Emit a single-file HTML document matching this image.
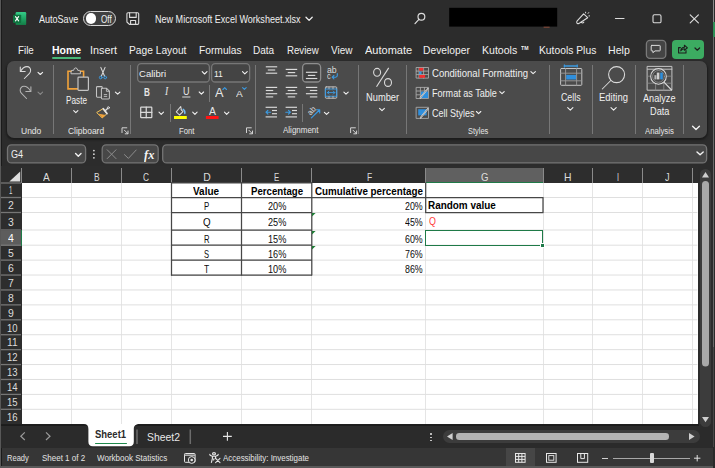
<!DOCTYPE html>
<html><head><meta charset="utf-8"><title>Excel</title>
<style>
html,body{margin:0;padding:0}
body{width:715px;height:468px;position:relative;overflow:hidden;background:#2c2c2c;font-family:"Liberation Sans",sans-serif}
.a{position:absolute}
.t{position:absolute;white-space:nowrap;line-height:1;transform-origin:0 0;display:block}
svg{position:absolute;overflow:visible}
.box{position:absolute;box-sizing:border-box;border:1px solid #6b6b6b;background:#3d3d3d;border-radius:4px}
.sep{position:absolute;width:1px;background:#777}
.hsep{position:absolute;width:1px;background:#8a8a8a;top:168px;height:15px}
.rsep{position:absolute;height:1px;background:#727272;left:1px;width:20px;box-shadow:0 1px 0 #464646}
.gv{position:absolute;width:1px;background:#e5e5e5;top:183px;height:242px}
.gh{position:absolute;height:1px;background:#e5e5e5;left:22px;width:676px}
.bk{position:absolute;background:#3a3a3a}

</style></head>
<body>
<div class="a" style="left:0;top:0;width:1px;height:468px;background:#585858"></div>
<div class="a" style="left:1px;top:0;width:1px;height:468px;background:#1b1b1b"></div>
<div class="a" style="left:7px;top:61px;width:700px;height:77px;border-radius:7px;background:#4b4b4b;box-shadow:0 1.5px 2px 0.5px #1c1c1c"></div>
<div class="sep" style="left:53px;top:65px;height:69px"></div>
<div class="sep" style="left:130px;top:65px;height:69px"></div>
<div class="sep" style="left:255px;top:65px;height:69px"></div>
<div class="sep" style="left:358px;top:65px;height:69px"></div>
<div class="sep" style="left:406px;top:65px;height:69px"></div>
<div class="sep" style="left:549px;top:65px;height:69px"></div>
<div class="sep" style="left:592px;top:65px;height:69px"></div>
<div class="sep" style="left:635px;top:65px;height:69px"></div>
<div class="sep" style="left:683px;top:65px;height:69px"></div>
<div class="sep" style="left:209.2px;top:85px;height:17px"></div>
<div class="sep" style="left:169.5px;top:104px;height:18px"></div>
<div class="sep" style="left:302.2px;top:104px;height:18px"></div>
<div class="a" style="left:51.5px;top:57.3px;width:29.4px;height:2px;background:#48b978;border-radius:1px"></div>
<div class="a" style="left:83px;top:10.5px;width:33.4px;height:15.8px;box-sizing:border-box;border:1.1px solid #d8d8d8;border-radius:8px;background:#404040"></div>
<div class="a" style="left:85.6px;top:13.2px;width:10.4px;height:10.4px;border-radius:50%;background:#fff"></div>
<svg style="left:0;top:0" width="715" height="40"><rect x="449.2" y="7.8" width="108" height="18.8" fill="#000"/><rect x="543.6" y="26.7" width="6" height="1" fill="#8a4a38"/></svg>
<div class="a" style="left:672.2px;top:40px;width:32px;height:18.6px;background:#3cab61;border-radius:4px"></div>
<div class="a" style="left:1px;top:166px;width:697px;height:17px;background:#2d2d2d"></div>
<div class="a" style="left:1px;top:183px;width:21px;height:243px;background:#2d2d2d"></div>
<div class="a" style="left:426px;top:168px;width:117px;height:14px;background:#606060"></div>
<div class="a" style="left:425.5px;top:181.6px;width:117.5px;height:1.6px;background:#1f7a48"></div>
<div class="a" style="left:1px;top:230.5px;width:20px;height:15px;background:#5d5d5d"></div>
<div class="a" style="left:20.6px;top:230px;width:1.6px;height:16px;background:#1f7a48"></div>
<div class="hsep" style="left:21px"></div>
<div class="hsep" style="left:71px"></div>
<div class="hsep" style="left:121px"></div>
<div class="hsep" style="left:171px"></div>
<div class="hsep" style="left:241px"></div>
<div class="hsep" style="left:311px"></div>
<div class="hsep" style="left:425px"></div>
<div class="hsep" style="left:542.5px"></div>
<div class="hsep" style="left:592px"></div>
<div class="hsep" style="left:642px"></div>
<div class="hsep" style="left:692px"></div>
<div class="a" style="left:22px;top:183px;width:675.5px;height:241.6px;background:#fff"></div>
<div class="gv" style="left:71px"></div>
<div class="gv" style="left:121px"></div>
<div class="gv" style="left:171px"></div>
<div class="gv" style="left:241px"></div>
<div class="gv" style="left:311px"></div>
<div class="gv" style="left:425px"></div>
<div class="gv" style="left:542.5px"></div>
<div class="gv" style="left:592px"></div>
<div class="gv" style="left:642px"></div>
<div class="gv" style="left:692px"></div>
<svg style="left:9px;top:170.6px" width="12" height="11"><path d="M11.2 0.4V10.4H0.4Z" fill="#dedede"/></svg>
<svg style="left:0;top:0" width="715" height="468" viewBox="0 0 715 468" fill="none">
<path d="M22 197.5H697.4" stroke="#dfdfdf" stroke-width="1"/>
<path d="M22 212.5H697.4" stroke="#dfdfdf" stroke-width="1"/>
<path d="M22 230.0H697.4" stroke="#dfdfdf" stroke-width="1"/>
<path d="M22 245.2H697.4" stroke="#dfdfdf" stroke-width="1"/>
<path d="M22 260.12H697.4" stroke="#dfdfdf" stroke-width="1"/>
<path d="M22 275.04H697.4" stroke="#dfdfdf" stroke-width="1"/>
<path d="M22 289.96H697.4" stroke="#dfdfdf" stroke-width="1"/>
<path d="M22 304.88H697.4" stroke="#dfdfdf" stroke-width="1"/>
<path d="M22 319.8H697.4" stroke="#dfdfdf" stroke-width="1"/>
<path d="M22 334.72H697.4" stroke="#dfdfdf" stroke-width="1"/>
<path d="M22 349.64H697.4" stroke="#dfdfdf" stroke-width="1"/>
<path d="M22 364.56H697.4" stroke="#dfdfdf" stroke-width="1"/>
<path d="M22 379.48H697.4" stroke="#dfdfdf" stroke-width="1"/>
<path d="M22 394.4H697.4" stroke="#dfdfdf" stroke-width="1"/>
<path d="M22 409.32H697.4" stroke="#dfdfdf" stroke-width="1"/>
<path d="M1 183.0H21" stroke="#767676" stroke-width="1.3"/>
<path d="M1 197.5H21" stroke="#767676" stroke-width="1.3"/>
<path d="M1 212.5H21" stroke="#767676" stroke-width="1.3"/>
<path d="M1 230.0H21" stroke="#767676" stroke-width="1.3"/>
<path d="M1 245.2H21" stroke="#767676" stroke-width="1.3"/>
<path d="M1 260.12H21" stroke="#767676" stroke-width="1.3"/>
<path d="M1 275.04H21" stroke="#767676" stroke-width="1.3"/>
<path d="M1 289.96H21" stroke="#767676" stroke-width="1.3"/>
<path d="M1 304.88H21" stroke="#767676" stroke-width="1.3"/>
<path d="M1 319.8H21" stroke="#767676" stroke-width="1.3"/>
<path d="M1 334.72H21" stroke="#767676" stroke-width="1.3"/>
<path d="M1 349.64H21" stroke="#767676" stroke-width="1.3"/>
<path d="M1 364.56H21" stroke="#767676" stroke-width="1.3"/>
<path d="M1 379.48H21" stroke="#767676" stroke-width="1.3"/>
<path d="M1 394.4H21" stroke="#767676" stroke-width="1.3"/>
<path d="M1 409.32H21" stroke="#767676" stroke-width="1.3"/>
</svg><svg style="left:0;top:0" width="715" height="468" viewBox="0 0 715 468" fill="none">
<rect x="137.6" y="63.6" width="71.80000000000001" height="18.4" rx="3.6" fill="#444444" stroke="#777" stroke-width="1.3"/>
<rect x="211.6" y="63.6" width="38.0" height="18.4" rx="3.6" fill="#444444" stroke="#777" stroke-width="1.3"/>
<rect x="302.6" y="63.6" width="18.0" height="18.4" rx="3.6" fill="#404040" stroke="#8e8e8e" stroke-width="1.3"/>
<rect x="646.4" y="40.4" width="19.399999999999977" height="18.0" rx="3.6" fill="#444" stroke="#7a7a7a" stroke-width="1.3"/>
<rect x="7.5" y="144.9" width="78.1" height="18.0" rx="4" fill="#474747" stroke="#747474" stroke-width="1.3"/>
<rect x="102.2" y="144.9" width="55.999999999999986" height="18.0" rx="4" fill="#474747" stroke="#747474" stroke-width="1.3"/>
<rect x="162.7" y="144.9" width="543.9000000000001" height="18.0" rx="4" fill="#474747" stroke="#747474" stroke-width="1.3"/>
</svg><svg style="left:0;top:0" width="715" height="468" viewBox="0 0 715 468" fill="none" stroke="#474747" stroke-width="1.25">
<path d="M171 182.9H312"/>
<path d="M171 197.5H312"/>
<path d="M171 212.5H312"/>
<path d="M171 230.0H312"/>
<path d="M171 245.2H312"/>
<path d="M171 260.12H312"/>
<path d="M171 275.04H312"/>
<path d="M171.5 182.3V275.6"/>
<path d="M241.5 182.3V275.6"/>
<path d="M311.8 182.3V275.6"/>
<path d="M312 197.5H426M425.7 182.6V213"/>
<path d="M425.2 197.5H543.4M425.2 212.5H543.4M543 197V213"/>
</svg>
<svg style="left:312.3px;top:213px" width="4" height="4"><path d="M0 0H3.6L0 3.6Z" fill="#1e7b34"/></svg>
<svg style="left:312.3px;top:230.6px" width="4" height="4"><path d="M0 0H3.6L0 3.6Z" fill="#1e7b34"/></svg>
<svg style="left:312.3px;top:245.8px" width="4" height="4"><path d="M0 0H3.6L0 3.6Z" fill="#1e7b34"/></svg>
<div class="a" style="left:425px;top:229.5px;width:118.4px;height:16.6px;box-sizing:border-box;border:1.6px solid #1f7a48"></div>
<div class="a" style="left:541px;top:244px;width:3px;height:3px;background:#1f7a48;outline:1px solid #fff"></div>
<div class="a" style="left:699.6px;top:168.6px;width:11.8px;height:258px;border-radius:6px;background:#3c3c3c"></div>
<svg style="left:0;top:0" width="715" height="468"><rect x="702" y="181" width="7" height="185.5" rx="3.5" fill="#a9a9a9"/></svg>
<svg style="left:701.8px;top:172px" width="7" height="6"><path d="M3.5 0L7 5.4H0Z" fill="#cfcfcf"/></svg>
<svg style="left:701.8px;top:417.4px" width="7" height="6"><path d="M0 0H7L3.5 5.2Z" fill="#cfcfcf"/></svg>
<div class="a" style="left:1px;top:424.4px;width:712px;height:24px;background:#2b2b2b"></div>
<div class="a" style="left:699.6px;top:414px;width:11.8px;height:12.6px;border-radius:0 0 6px 6px;background:#3c3c3c"></div>
<svg style="left:701.8px;top:417.4px" width="7" height="6"><path d="M0 0H7L3.5 5.2Z" fill="#cfcfcf"/></svg>
<div class="a" style="left:2px;top:448px;width:711px;height:18px;background:#363636"></div>
<div class="a" style="left:0;top:466px;width:713px;height:2px;background:#595959"></div>
<div class="a" style="left:713px;top:0;width:2px;height:468px;background:#2a2a2a"></div>
<div class="a" style="left:713px;top:0;width:1px;height:22px;background:#8a8a8a"></div>
<div class="a" style="left:713px;top:22px;width:2px;height:15px;background:#2f8f57"></div>
<div class="a" style="left:713px;top:37px;width:1px;height:310px;background:#6a6a6a"></div><div class="a" style="left:713px;top:347px;width:1px;height:100px;background:#484848"></div>
<svg style="left:0;top:0" width="715" height="468"><rect x="1" y="424.3" width="698" height="1.6" fill="#1b1b1b"/></svg>
<svg style="left:84px;top:424.4px" width="56" height="24"><path d="M0 0H56C51.6 0 49.8 1.6 49.8 5V17.8Q49.8 22.2 45.4 22.2H8.8Q4.4 22.2 4.4 17.8V5C4.4 1.6 3 0 0 0Z" fill="#fff"/></svg>
<div class="a" style="left:95px;top:442.6px;width:32px;height:1.8px;background:#1f8a4c;border-radius:1px"></div>
<svg style="left:0;top:0" width="715" height="468"><path d="M137 429.5V444M190.3 429.5V444" stroke="#6c6c6c" stroke-width="1.5"/></svg>

<svg style="left:20px;top:432px" width="32" height="9" fill="none" stroke="#9a9a9a" stroke-width="1.2"><path d="M4.8 0.4L0.8 4.2L4.8 8"/><path d="M26 0.4L30 4.2L26 8"/></svg>
<svg style="left:223px;top:432px" width="9" height="9" stroke="#e6e6e6" stroke-width="1.1"><path d="M4.4 0V8.8M0 4.4H8.8"/></svg>
<div class="a" style="left:430.4px;top:433.4px;width:1.6px;height:1.6px;background:#d8d8d8;border-radius:50%"></div>
<div class="a" style="left:430.4px;top:436.6px;width:1.6px;height:1.6px;background:#d8d8d8;border-radius:50%"></div>
<div class="a" style="left:430.4px;top:439.8px;width:1.6px;height:1.6px;background:#d8d8d8;border-radius:50%"></div>
<div class="a" style="left:442.6px;top:430.2px;width:257px;height:13px;border-radius:6.5px;background:#3c3c3c"></div>
<div class="a" style="left:456.3px;top:433.4px;width:212.5px;height:6.6px;border-radius:3.3px;background:#b4b4b4"></div>
<svg style="left:446.6px;top:433.2px" width="6" height="7"><path d="M5.6 0V7L0 3.5Z" fill="#cfcfcf"/></svg>
<svg style="left:689.4px;top:433.2px" width="6" height="7"><path d="M0 0V7L5.6 3.5Z" fill="#cfcfcf"/></svg>
<div class="a" style="left:505.8px;top:448px;width:29.6px;height:18px;background:#464646"></div>
<svg style="left:515px;top:453px" width="11" height="10" fill="none" stroke="#e8e8e8" stroke-width="1"><rect x="0.5" y="0.5" width="9.6" height="8.8"/><path d="M3.7 0.5V9.3M6.9 0.5V9.3M0.5 3.4H10.1M0.5 6.4H10.1"/></svg>
<svg style="left:546px;top:453px" width="11" height="10" fill="none" stroke="#e8e8e8" stroke-width="1"><rect x="0.5" y="0.5" width="9.6" height="8.8"/><rect x="2.8" y="2.6" width="5" height="4.6" stroke-width="0.9"/></svg>
<svg style="left:577px;top:453px" width="12" height="10" fill="none" stroke="#e8e8e8" stroke-width="1"><rect x="0.5" y="0.5" width="10.2" height="8.8"/><path d="M3.8 0.5V5.6H7.4V0.5" /></svg>
<div class="a" style="left:602.4px;top:457.6px;width:6.0px;height:1px;background:#d0d0d0"></div>
<div class="a" style="left:613px;top:457.6px;width:77.20000000000005px;height:1px;background:#a8a8a8"></div>
<div class="a" style="left:649.8px;top:453px;width:4px;height:9.6px;background:#d8d8d8;border-radius:1px"></div>
<svg style="left:694.4px;top:454.6px" width="7" height="7" stroke="#e0e0e0" stroke-width="1"><path d="M3.2 0V6.4M0 3.2H6.4"/></svg>
<svg style="left:184px;top:453px" width="13" height="12" fill="none" stroke="#e6e6e6" stroke-width="1"><rect x="0.5" y="0.5" width="10.6" height="8.8" rx="0.8"/><path d="M0.5 2.2H11.1" stroke-width="1.4" stroke="#bdbdbd"/><circle cx="7.7" cy="7" r="3.4" fill="#363636"/><circle cx="7.7" cy="7" r="1.3" fill="#e6e6e6" stroke="none"/></svg>
<svg style="left:208.6px;top:452.4px" width="13" height="12" fill="none" stroke="#e6e6e6" stroke-width="1.15" stroke-linecap="round" stroke-linejoin="round"><ellipse cx="5" cy="1.7" rx="1.5" ry="1.1"/><path d="M0.8 2.4Q0.6 3.6 3.4 4.2V6.6L2.4 10.4M9.2 2.4Q9.4 3.6 6.6 4.2V6.6M3.4 4.2H6.6M5 6.8L4.6 8"/><path d="M6.6 6.4L11 10.6M11 6.4L6.6 10.6" stroke-width="1.05"/></svg><svg style="left:0;top:0" width="715" height="468" viewBox="0 0 715 468" fill="none" stroke-linecap="round" stroke-linejoin="round">
<defs><linearGradient id="xg" x1="0" y1="0" x2="0" y2="1"><stop offset="0" stop-color="#35cc88"/><stop offset="0.5" stop-color="#1fa564"/><stop offset="1" stop-color="#147a46"/></linearGradient></defs>
<rect x="15.6" y="12" width="10.6" height="13.1" rx="1.2" fill="url(#xg)"/>
<rect x="13" y="14.7" width="8.2" height="8.3" rx="0.9" fill="#0f7440"/>
<path d="M15.5 16.6L18.6 20.9M18.6 16.6L15.5 20.9" stroke="#fff" stroke-width="1.1"/>
<g stroke="#dcdcdc" stroke-width="1.1"><path d="M128 12.7H137.6Q138.7 12.7 138.7 13.8V23.3Q138.7 24.4 137.6 24.4H129.4L126.9 22V13.8Q126.9 12.7 128 12.7Z"/><path d="M129.6 12.9V17.4H136.2V12.9"/><path d="M130.6 24.2V20.5H135.6V24.2"/></g>
<path d="M306 17.3L309.1 20.4L312.2 17.3" stroke="#f0f0f0" stroke-width="1.3"/>
<g stroke="#dcdcdc" stroke-width="1.2"><circle cx="421.4" cy="16.7" r="3.4"/><path d="M418.9 19.3L415 23.6"/></g>
<g stroke="#dcdcdc" stroke-width="1.1"><path d="M583.6 13.8L587.7 17.7L580 22.8L578.8 23.5Q577.3 24 576.8 22.7Q576.5 21.8 577.2 20.8Z"/><path d="M581.4 22.3Q582.6 23.6 583.8 22.2"/><path d="M585.6 12.9V12.2M588.1 13.4L588.7 12.6M588.9 15.9H589.6" stroke-width="1"/></g>
<path d="M615.4 18.5H624" stroke="#dcdcdc" stroke-width="1.1"/>
<rect x="653" y="14.8" width="8" height="8" rx="1.4" stroke="#dcdcdc" stroke-width="1.1"/>
<path d="M690.2 14.8L698.4 22.9M698.4 14.8L690.2 22.9" stroke="#dcdcdc" stroke-width="1.15"/>
<path d="M651.8 45.4H659.6Q660.2 45.4 660.2 46V50.3Q660.2 50.9 659.6 50.9H655L652.9 52.7V50.9H651.8Q651.2 50.9 651.2 50.3V46Q651.2 45.4 651.8 45.4Z" stroke="#dcdcdc" stroke-width="1"/>
<g stroke="#1d1d1d" stroke-width="1.1"><path d="M680.4 47.6H678.6V53H686V50.6"/><path d="M680.8 50.8Q681 47.4 684.4 47.2V45.2L687.4 47.8L684.4 50.2V48.8Q682.2 48.8 680.8 50.8Z"/><path d="M695 48L697.3 50.2L699.6 48" stroke-width="1.2"/></g><g stroke="#dadada" stroke-width="1.05"><path d="M20.3 66.9V71.5H25.2"/><path d="M20.6 71.2C22.2 68.4 24.6 66.6 27 66.6C29.4 66.6 30.8 68.5 30.6 70.7C30.5 72 29.9 72.9 29 73.8L24.4 78.5"/></g>
<g stroke="#b4b4b4" stroke-width="1.05"><path d="M30.9 86.8V91.5H25.8"/><path d="M30.6 91.2C29 88.4 26.4 86.3 24 86.3C21.5 86.3 20 88.3 20.2 90.6C20.3 91.8 20.9 92.8 21.8 93.7L26.5 98.5"/></g>
<path d="M38.0 72.3L40.3 74.5L42.6 72.3" stroke="#f2f2f2" stroke-width="1.1"/>
<path d="M38.0 92.1L40.3 94.3L42.6 92.1" stroke="#8a8a8a" stroke-width="1.1"/>
<path d="M77.4 88.9H68V71.3H71.2M80.4 71.3H83.6V76.6" stroke="#f2a33a" stroke-width="1.6" stroke-linejoin="miter"/>
<path d="M71 73.4V71.4Q71 70.4 72 70.4H73.6Q74 67.9 75.7 67.9Q77.4 67.9 77.8 70.4H79.4Q80.4 70.4 80.4 71.4V73.4Z" stroke="#c4c4c4" stroke-width="1"/>
<rect x="78" y="77.2" width="10.4" height="13.2" rx="0.8" stroke="#c4c4c4" stroke-width="1.2" fill="#464646"/>
<path d="M73.7 110.7L75.8 112.7L77.9 110.7" stroke="#f2f2f2" stroke-width="1.1"/>
<path d="M100.8 67.4L104.6 76.2M105.1 67.4L101.3 76.2" stroke="#dadada" stroke-width="1.05"/>
<circle cx="100.7" cy="77.5" r="1.35" stroke="#3b9ae1" stroke-width="1"/><circle cx="105.2" cy="77.5" r="1.35" stroke="#3b9ae1" stroke-width="1"/>
<g stroke="#c4c4c4" stroke-width="1.05"><path d="M101.2 97.2H97.4Q96.5 97.2 96.5 96.3V87.5Q96.5 86.6 97.4 86.6H101.4Q102.2 86.6 102.2 87.4V88.2"/><path d="M101.4 89.2Q101.4 88.3 102.3 88.3H106.6L109.4 91.1V98Q109.4 98.9 108.5 98.9H102.3Q101.4 98.9 101.4 98Z"/><path d="M106.4 88.5V91.3H109.2" stroke-width="0.9"/><path d="M104.2 94.6H106.8M104.2 96.4H106.8" stroke-width="0.9"/></g>
<path d="M115.4 92.1L117.7 94.2L119.9 92.1" stroke="#f2f2f2" stroke-width="1.1"/>
<path d="M97 112.3L102.9 108.8L106.8 113.9L102.5 117.6Z" stroke="#f6c65c" stroke-width="1" />
<path d="M99.4 114.3L105 115.3L102.5 117.5Z" fill="#f2a33a" stroke="#f2a33a" stroke-width="0.8"/>
<path d="M103.3 108.7L107 113.6" stroke="#e4e4e4" stroke-width="1.7"/>
<path d="M105.4 110.4L107.6 108.4" stroke="#e0e0e0" stroke-width="1.3"/><circle cx="108.4" cy="107.7" r="1" stroke="#e0e0e0" stroke-width="0.9"/>
<path d="M202.2 71.7L204.6 74.0L207.0 71.7" stroke="#f2f2f2" stroke-width="1.1"/>
<path d="M242.5 71.7L244.8 73.9L247.2 71.7" stroke="#f2f2f2" stroke-width="1.1"/>
<path d="M199.2 92.0L201.4 94.1L203.6 92.0" stroke="#f2f2f2" stroke-width="1.1"/>
<path d="M159.0 112.2L161.2 114.3L163.5 112.2" stroke="#f2f2f2" stroke-width="1.1"/>
<path d="M192.7 112.2L194.9 114.3L197.1 112.2" stroke="#f2f2f2" stroke-width="1.1"/>
<path d="M224.5 112.2L226.7 114.3L228.9 112.2" stroke="#f2f2f2" stroke-width="1.1"/>
<path d="M182.6 97H190" stroke="#dadada" stroke-width="1"/>
<path d="M222.9 89.5L224.7 87.7L226.5 89.5" stroke="#3b9ae1" stroke-width="1.1"/>
<path d="M242.6 87.6L244.4 89.4L246.2 87.6" stroke="#3b9ae1" stroke-width="1.1"/>
<g stroke="#dadada" stroke-width="1.25"><rect x="140.7" y="107.2" width="11.1" height="10.5" rx="0.6"/><path d="M146.25 107.2V117.7M140.7 112.45H151.8"/></g>
<path d="M180.7 106.5L176.3 111.8L179.5 115L183 111.7L181 109.5M180.7 106.5L181.5 110.3" stroke="#dadada" stroke-width="1.05"/>
<path d="M183.2 109.4Q185.3 110.8 184.8 113.4" stroke="#74baf0" stroke-width="1.5"/>
<rect x="174" y="116" width="12.8" height="3" fill="#ffff00"/>
<rect x="205.9" y="116" width="12.7" height="3" fill="#ff1414"/>
<path d="M265.8 66.8H277.2" stroke="#dadada" stroke-width="1.15" stroke-linecap="butt"/>
<path d="M267.8 70.0H275.2" stroke="#dadada" stroke-width="1.15" stroke-linecap="butt"/>
<path d="M265.8 73.2H277.2" stroke="#dadada" stroke-width="1.15" stroke-linecap="butt"/>
<path d="M285.7 69.4H297.2" stroke="#dadada" stroke-width="1.15" stroke-linecap="butt"/>
<path d="M287.7 72.6H295.2" stroke="#dadada" stroke-width="1.15" stroke-linecap="butt"/>
<path d="M285.7 75.8H297.2" stroke="#dadada" stroke-width="1.15" stroke-linecap="butt"/>
<path d="M305.9 72.3H317.3" stroke="#dadada" stroke-width="1.15" stroke-linecap="butt"/>
<path d="M307.9 75.4H315.3" stroke="#dadada" stroke-width="1.15" stroke-linecap="butt"/>
<path d="M305.9 78.5H317.3" stroke="#dadada" stroke-width="1.15" stroke-linecap="butt"/>
<path d="M265.8 87.4H277.2" stroke="#dadada" stroke-width="1.15" stroke-linecap="butt"/>
<path d="M265.8 90.5H273.2" stroke="#dadada" stroke-width="1.15" stroke-linecap="butt"/>
<path d="M265.8 93.7H277.2" stroke="#dadada" stroke-width="1.15" stroke-linecap="butt"/>
<path d="M265.8 96.9H273.2" stroke="#dadada" stroke-width="1.15" stroke-linecap="butt"/>
<path d="M285.7 87.4H297.2" stroke="#dadada" stroke-width="1.15" stroke-linecap="butt"/>
<path d="M287.7 90.5H295.2" stroke="#dadada" stroke-width="1.15" stroke-linecap="butt"/>
<path d="M285.7 93.7H297.2" stroke="#dadada" stroke-width="1.15" stroke-linecap="butt"/>
<path d="M287.7 96.9H295.2" stroke="#dadada" stroke-width="1.15" stroke-linecap="butt"/>
<path d="M305.9 87.4H317.3" stroke="#dadada" stroke-width="1.15" stroke-linecap="butt"/>
<path d="M309.9 90.5H317.3" stroke="#dadada" stroke-width="1.15" stroke-linecap="butt"/>
<path d="M305.9 93.7H317.3" stroke="#dadada" stroke-width="1.15" stroke-linecap="butt"/>
<path d="M309.9 96.9H317.3" stroke="#dadada" stroke-width="1.15" stroke-linecap="butt"/>
<path d="M265.6 107.3H277.0" stroke="#dadada" stroke-width="1.15" stroke-linecap="butt"/>
<path d="M272.0 110.5H277.0" stroke="#dadada" stroke-width="1.15" stroke-linecap="butt"/>
<path d="M272.0 113.7H277.0" stroke="#dadada" stroke-width="1.15" stroke-linecap="butt"/>
<path d="M265.6 116.9H277.0" stroke="#dadada" stroke-width="1.15" stroke-linecap="butt"/>
<path d="M285.6 107.3H297.0" stroke="#dadada" stroke-width="1.15" stroke-linecap="butt"/>
<path d="M292.0 110.5H297.0" stroke="#dadada" stroke-width="1.15" stroke-linecap="butt"/>
<path d="M292.0 113.7H297.0" stroke="#dadada" stroke-width="1.15" stroke-linecap="butt"/>
<path d="M285.6 116.9H297.0" stroke="#dadada" stroke-width="1.15" stroke-linecap="butt"/>
<path d="M270.6 112.2H266M267.9 110.3L266 112.2L267.9 114.1" stroke="#3b9ae1" stroke-width="1.15"/>
<path d="M285.8 112.2H290.4M288.5 110.3L290.4 112.2L288.5 114.1" stroke="#3b9ae1" stroke-width="1.15"/>
<path d="M337.3 73.6V75.6Q337.3 77.2 335.6 77.2H332.2M333.9 75.5L332.2 77.2L333.9 78.9" stroke="#3b9ae1" stroke-width="1.1"/>
<rect x="325.4" y="86.9" width="11.3" height="11.3" rx="0.8" stroke="#c4c4c4" stroke-width="1"/>
<rect x="325.4" y="88.9" width="11.3" height="7.3" stroke="#3b9ae1" stroke-width="1.05"/>
<path d="M327.4 92.6H334.8M328.9 91.1L327.4 92.6L328.9 94.1M333.3 91.1L334.8 92.6L333.3 94.1" stroke="#3b9ae1" stroke-width="0.95"/>
<path d="M329 87V88.8M333 87V88.8M329 96.3V98.1M333 96.3V98.1" stroke="#c4c4c4" stroke-width="0.8"/>
<path d="M343.9 92.1L346.0 94.1L348.2 92.1" stroke="#f2f2f2" stroke-width="1.1"/>
<path d="M311.4 117.9L319.4 110M316.4 109.7H319.7V113" stroke="#3b9ae1" stroke-width="1.15"/>
<path d="M324.4 112.3L326.6 114.4L328.8 112.3" stroke="#f2f2f2" stroke-width="1.1"/>
<g stroke="#dadada" stroke-width="1.1"><ellipse cx="377.1" cy="72.3" rx="3.5" ry="3.9"/><ellipse cx="388" cy="82.5" rx="3.5" ry="3.9"/><path d="M388.7 67.9L376.5 86.8" stroke-linecap="butt"/></g>
<path d="M379.6 108.4L382.0 110.7L384.4 108.4" stroke="#f2f2f2" stroke-width="1.1"/>
<g stroke="#a8a8a8" stroke-width="0.9"><rect x="416.5" y="67.5" width="12" height="10.6"/><path d="M419 67.5V78.1M423.6 67.5V78.1M416.5 71V71M416.5 71.1H428.5M416.5 74.6H428.5"/></g>
<rect x="419.1" y="67.9" width="4.2" height="2.8" fill="#f03030"/><rect x="419.1" y="71.6" width="2.4" height="2.6" fill="#3b9ae1"/><rect x="419.1" y="75" width="6" height="2.8" fill="#f03030"/>
<path d="M530.9 71.6L533.1 73.7L535.4 71.6" stroke="#f2f2f2" stroke-width="1.1"/>
<g stroke="#a8a8a8" stroke-width="0.9"><rect x="416.5" y="87.4" width="12" height="11.1"/><path d="M420.4 87.4V98.5M424.4 87.4V91M416.5 91H428.5M416.5 94.8H420.4"/></g>
<path d="M420.9 91.6H428.1V98.1H420.9Z" fill="#2f8fdd"/>
<path d="M427.8 88.6L420.4 97.8" stroke="#e8e8e8" stroke-width="1.5"/><path d="M427.6 88.8L420.6 97.6" stroke="#555" stroke-width="0.5"/>
<path d="M499.8 91.6L502.0 93.7L504.2 91.6" stroke="#f2f2f2" stroke-width="1.1"/>
<g stroke="#a8a8a8" stroke-width="0.9"><rect x="416.5" y="107.3" width="12" height="11.1"/></g>
<path d="M418.2 109.2H426.6V115.4H418.2Z" fill="#2f8fdd"/>
<path d="M427.9 108.8L420.6 117.8" stroke="#e8e8e8" stroke-width="1.5"/><path d="M427.7 109L420.8 117.6" stroke="#555" stroke-width="0.5"/>
<path d="M476.4 111.5L478.6 113.6L480.8 111.5" stroke="#f2f2f2" stroke-width="1.1"/>
<g stroke="#c4c4c4" stroke-width="1"><rect x="560.6" y="68.5" width="21.2" height="16.8" rx="0.8"/></g>
<path d="M565.6 68.5V85.3M576.6 68.5V85.3M560.6 73.2H581.8M560.6 80.8H581.8" stroke="#9a9a9a" stroke-width="0.9"/>
<rect x="566.2" y="74.9" width="9.8" height="4.6" fill="#2f8fdd"/>
<path d="M564.4 66H577.2" stroke="#3b9ae1" stroke-width="1.7"/><path d="M564.4 64.8V67.2M577.2 64.8V67.2" stroke="#3b9ae1" stroke-width="1"/>
<path d="M567.7 107.7L570.3 110.2L572.9 107.7" stroke="#f2f2f2" stroke-width="1.1"/>
<g stroke="#dadada" stroke-width="1.05"><circle cx="616.6" cy="74.6" r="8"/><path d="M610.8 80.5L602.3 89"/></g>
<path d="M611.0 107.7L613.6 110.2L616.2 107.7" stroke="#f2f2f2" stroke-width="1.1"/>
<g stroke="#c4c4c4" stroke-width="1"><rect x="647.5" y="66.4" width="24.4" height="23.8"/><path d="M647.5 69.2H671.9"/></g>
<path d="M655.6 69.2V90.2M663.8 69.2V90.2M647.5 76.2H671.9M647.5 83.2H671.9" stroke="#8e8e8e" stroke-width="0.8"/>
<circle cx="658.5" cy="76.4" r="7.8" fill="#464646" stroke="#dadada" stroke-width="1.05"/>
<circle cx="658.5" cy="76.4" r="5.9" stroke="#9a9a9a" stroke-width="0.7"/>
<rect x="654.4" y="75.2" width="2" height="4.2" fill="#b4b4b4"/><rect x="656.8" y="72.6" width="2.6" height="6.8" fill="#cfcfcf"/><rect x="660.2" y="72.6" width="2.6" height="6.8" fill="#2f8fdd"/>
<path d="M664.2 82.4L671.6 90" stroke="#dadada" stroke-width="1.1"/>
<path d="M692.6 126.2L696.0 129.4L699.4 126.2" stroke="#f2f2f2" stroke-width="1.4"/>
<path d="M75.6 153.6L78.3 156.2L81.0 153.6" stroke="#f2f2f2" stroke-width="1.4"/>
<circle cx="93.9" cy="150.6" r="0.9" fill="#d6d6d6"/>
<circle cx="93.9" cy="154.2" r="0.9" fill="#d6d6d6"/>
<circle cx="93.9" cy="157.8" r="0.9" fill="#d6d6d6"/>
<path d="M107.2 149.8L116 158.6M116 149.8L107.2 158.6" stroke="#8c8c8c" stroke-width="1"/>
<path d="M124.4 154.6L128.4 158.4L136.2 150" stroke="#8c8c8c" stroke-width="1"/>
<path d="M697.0 151.9L700.1 154.8L703.2 151.9" stroke="#f2f2f2" stroke-width="1.4"/>
<text x="307.2" y="113.4" transform="rotate(-48 311.4 110.8)" font-family="Liberation Sans, sans-serif" font-size="7.8" fill="#dcdcdc" stroke="none">ab</text>
<g stroke="#dadada" stroke-width="0.95"><path d="M355.4 127.8H350.6V132.6"/><path d="M353.0 130.2L356.4 133.6M356.6 131.0V133.8H353.8"/></g>
<g stroke="#dadada" stroke-width="0.95"><path d="M251.3 127.8H246.5V132.6"/><path d="M248.9 130.2L252.3 133.6M252.5 131.0V133.8H249.7"/></g>
<g stroke="#dadada" stroke-width="0.95"><path d="M126.8 127.8H122V132.6"/><path d="M124.4 130.2L127.8 133.6M128.0 131.0V133.8H125.2"/></g>
</svg>
<span class="t" style="left:38.70px;top:13.69px;font-size:11px;color:#f0f0f0;transform:scaleX(0.8217);">AutoSave</span>
<span class="t" style="left:100.50px;top:13.91px;font-size:10.5px;color:#f0f0f0;transform:scaleX(0.7773);">Off</span>
<span class="t" style="left:154.90px;top:13.69px;font-size:11px;color:#f0f0f0;transform:scaleX(0.8222);">New Microsoft Excel Worksheet.xlsx</span>
<span class="t" style="left:17.60px;top:44.63px;font-size:11.3px;color:#f0f0f0;transform:scaleX(0.8649);">File</span>
<span class="t" style="left:51.50px;top:44.63px;font-size:11.3px;color:#ffffff;transform:scaleX(0.9292);font-weight:700;">Home</span>
<span class="t" style="left:89.94px;top:44.63px;font-size:11.3px;color:#f0f0f0;transform:scaleX(0.9568);">Insert</span>
<span class="t" style="left:129.10px;top:44.63px;font-size:11.3px;color:#f0f0f0;transform:scaleX(0.9051);">Page Layout</span>
<span class="t" style="left:198.50px;top:44.63px;font-size:11.3px;color:#f0f0f0;transform:scaleX(0.9066);">Formulas</span>
<span class="t" style="left:252.70px;top:44.63px;font-size:11.3px;color:#f0f0f0;transform:scaleX(0.8869);">Data</span>
<span class="t" style="left:286.70px;top:44.63px;font-size:11.3px;color:#f0f0f0;transform:scaleX(0.8553);">Review</span>
<span class="t" style="left:330.90px;top:44.63px;font-size:11.3px;color:#f0f0f0;transform:scaleX(0.8836);">View</span>
<span class="t" style="left:364.50px;top:44.63px;font-size:11.3px;color:#f0f0f0;transform:scaleX(0.9756);">Automate</span>
<span class="t" style="left:422.80px;top:44.63px;font-size:11.3px;color:#f0f0f0;transform:scaleX(0.9105);">Developer</span>
<span class="t" style="left:481.80px;top:44.63px;font-size:11.3px;color:#f0f0f0;transform:scaleX(0.9334);">Kutools</span>
<span class="t" style="left:520.50px;top:45.86px;font-size:5.6px;color:#f0f0f0;transform:scaleX(0.9148);font-weight:700;">TM</span>
<span class="t" style="left:539.10px;top:44.63px;font-size:11.3px;color:#f0f0f0;transform:scaleX(0.9122);">Kutools Plus</span>
<span class="t" style="left:607.80px;top:44.63px;font-size:11.3px;color:#f0f0f0;transform:scaleX(0.9368);">Help</span>
<span class="t" style="left:21.30px;top:125.87px;font-size:9.6px;color:#e6e6e6;transform:scaleX(0.8850);">Undo</span>
<span class="t" style="left:67.60px;top:125.87px;font-size:9.6px;color:#e6e6e6;transform:scaleX(0.8790);">Clipboard</span>
<span class="t" style="left:179.00px;top:125.87px;font-size:9.6px;color:#e6e6e6;transform:scaleX(0.8038);">Font</span>
<span class="t" style="left:282.70px;top:125.47px;font-size:9.6px;color:#e6e6e6;transform:scaleX(0.8326);">Alignment</span>
<span class="t" style="left:467.50px;top:125.87px;font-size:9.6px;color:#e6e6e6;transform:scaleX(0.7748);">Styles</span>
<span class="t" style="left:644.90px;top:125.57px;font-size:9.6px;color:#e6e6e6;transform:scaleX(0.8072);">Analysis</span>
<span class="t" style="left:65.70px;top:94.93px;font-size:10.6px;color:#f0f0f0;transform:scaleX(0.7758);">Paste</span>
<span class="t" style="left:139.10px;top:69.29px;font-size:9.7px;color:#f0f0f0;transform:scaleX(0.9853);">Calibri</span>
<span class="t" style="left:213.50px;top:69.29px;font-size:9.7px;color:#f0f0f0;transform:scaleX(0.8792);">11</span>
<span class="t" style="left:365.70px;top:92.43px;font-size:10.6px;color:#f0f0f0;transform:scaleX(0.8781);">Number</span>
<span class="t" style="left:431.60px;top:68.23px;font-size:10.6px;color:#f0f0f0;transform:scaleX(0.9008);">Conditional Formatting</span>
<span class="t" style="left:431.60px;top:88.13px;font-size:10.6px;color:#f0f0f0;transform:scaleX(0.8559);">Format as Table</span>
<span class="t" style="left:431.60px;top:108.03px;font-size:10.6px;color:#f0f0f0;transform:scaleX(0.8483);">Cell Styles</span>
<span class="t" style="left:560.90px;top:92.33px;font-size:10.6px;color:#f0f0f0;transform:scaleX(0.8301);">Cells</span>
<span class="t" style="left:599.20px;top:92.33px;font-size:10.6px;color:#f0f0f0;transform:scaleX(0.8923);">Editing</span>
<span class="t" style="left:643.20px;top:93.43px;font-size:10.6px;color:#f0f0f0;transform:scaleX(0.8625);">Analyze</span>
<span class="t" style="left:649.60px;top:105.63px;font-size:10.6px;color:#f0f0f0;transform:scaleX(0.8672);">Data</span>
<span class="t" style="left:143.70px;top:87.11px;font-size:10.5px;color:#e6e6e6;transform:scaleX(0.7750);font-weight:700;">B</span>
<span class="t" style="left:165.03px;top:86.28px;font-size:11.6px;color:#e6e6e6;transform:scaleX(0.8333);font-family:'Liberation Serif', serif;font-style:italic;">I</span>
<span class="t" style="left:183.10px;top:87.17px;font-size:10.2px;color:#e6e6e6;transform:scaleX(0.8857);">U</span>
<span class="t" style="left:214.70px;top:87.04px;font-size:12px;color:#e6e6e6;transform:scaleX(1.0625);">A</span>
<span class="t" style="left:235.70px;top:88.90px;font-size:9.8px;color:#e6e6e6;transform:scaleX(1.0286);">A</span>
<span class="t" style="left:208.70px;top:105.38px;font-size:11.6px;color:#e6e6e6;transform:scaleX(0.9000);">A</span>
<span class="t" style="left:11.10px;top:149.57px;font-size:10.2px;color:#f0f0f0;transform:scaleX(0.8905);">G4</span>
<span class="t" style="left:144.20px;top:147.70px;font-size:13px;color:#f4f4f4;transform:scaleX(0.9533);font-weight:700;font-family:'Liberation Serif', serif;font-style:italic;">fx</span>
<span class="t" style="left:43.20px;top:172.60px;font-size:10.4px;color:#dcdcdc;transform:scaleX(0.9714);">A</span>
<span class="t" style="left:94.05px;top:172.60px;font-size:10.4px;color:#dcdcdc;transform:scaleX(0.8143);">B</span>
<span class="t" style="left:143.10px;top:172.60px;font-size:10.4px;color:#dcdcdc;transform:scaleX(0.8000);">C</span>
<span class="t" style="left:203.20px;top:172.60px;font-size:10.4px;color:#dcdcdc;transform:scaleX(1.0000);">D</span>
<span class="t" style="left:274.05px;top:172.60px;font-size:10.4px;color:#dcdcdc;transform:scaleX(0.7571);">E</span>
<span class="t" style="left:366.75px;top:172.60px;font-size:10.4px;color:#dcdcdc;transform:scaleX(0.8167);">F</span>
<span class="t" style="left:480.50px;top:172.60px;font-size:10.4px;color:#dcdcdc;transform:scaleX(0.9250);">G</span>
<span class="t" style="left:563.90px;top:172.60px;font-size:10.4px;color:#dcdcdc;transform:scaleX(1.0000);">H</span>
<span class="t" style="left:616.50px;top:172.60px;font-size:10.4px;color:#dcdcdc;transform:scaleX(0.7000);">I</span>
<span class="t" style="left:665.10px;top:172.60px;font-size:10.4px;color:#dcdcdc;transform:scaleX(0.8800);">J</span>
<span class="t" style="left:8.90px;top:185.26px;font-size:10.8px;color:#dcdcdc;transform:scaleX(0.5667);">1</span>
<span class="t" style="left:8.00px;top:200.26px;font-size:10.8px;color:#dcdcdc;transform:scaleX(0.9667);">2</span>
<span class="t" style="left:8.00px;top:216.51px;font-size:10.8px;color:#dcdcdc;transform:scaleX(0.9667);">3</span>
<span class="t" style="left:8.00px;top:232.86px;font-size:10.8px;color:#ffffff;transform:scaleX(0.9667);">4</span>
<span class="t" style="left:8.00px;top:247.92px;font-size:10.8px;color:#dcdcdc;transform:scaleX(0.9667);">5</span>
<span class="t" style="left:8.00px;top:262.84px;font-size:10.8px;color:#dcdcdc;transform:scaleX(0.9667);">6</span>
<span class="t" style="left:8.00px;top:277.76px;font-size:10.8px;color:#dcdcdc;transform:scaleX(0.9667);">7</span>
<span class="t" style="left:8.00px;top:292.68px;font-size:10.8px;color:#dcdcdc;transform:scaleX(0.9667);">8</span>
<span class="t" style="left:8.00px;top:307.60px;font-size:10.8px;color:#dcdcdc;transform:scaleX(0.9667);">9</span>
<span class="t" style="left:6.60px;top:322.52px;font-size:10.8px;color:#dcdcdc;transform:scaleX(0.8830);">10</span>
<span class="t" style="left:6.60px;top:337.44px;font-size:10.8px;color:#dcdcdc;transform:scaleX(0.9462);">11</span>
<span class="t" style="left:6.60px;top:352.36px;font-size:10.8px;color:#dcdcdc;transform:scaleX(0.8830);">12</span>
<span class="t" style="left:6.60px;top:367.28px;font-size:10.8px;color:#dcdcdc;transform:scaleX(0.8830);">13</span>
<span class="t" style="left:6.60px;top:382.20px;font-size:10.8px;color:#dcdcdc;transform:scaleX(0.8830);">14</span>
<span class="t" style="left:6.60px;top:397.12px;font-size:10.8px;color:#dcdcdc;transform:scaleX(0.8830);">15</span>
<span class="t" style="left:6.60px;top:412.04px;font-size:10.8px;color:#dcdcdc;transform:scaleX(0.8830);">16</span>
<span class="t" style="left:193.20px;top:186.58px;font-size:10.3px;color:#000;transform:scaleX(0.9677);font-weight:700;">Value</span>
<span class="t" style="left:250.50px;top:186.58px;font-size:10.3px;color:#000;transform:scaleX(0.9374);font-weight:700;">Percentage</span>
<span class="t" style="left:315.00px;top:186.58px;font-size:10.3px;color:#000;transform:scaleX(0.9527);font-weight:700;">Cumulative percentage</span>
<span class="t" style="left:428.20px;top:200.98px;font-size:10.3px;color:#000;transform:scaleX(0.9625);font-weight:700;">Random value</span>
<span class="t" style="left:203.80px;top:201.33px;font-size:10.6px;color:#0c0c0c;transform:scaleX(0.7429);">P</span>
<span class="t" style="left:202.70px;top:217.13px;font-size:10.6px;color:#0c0c0c;transform:scaleX(0.9250);">Q</span>
<span class="t" style="left:203.50px;top:233.83px;font-size:10.6px;color:#0c0c0c;transform:scaleX(0.7250);">R</span>
<span class="t" style="left:203.90px;top:248.73px;font-size:10.6px;color:#0c0c0c;transform:scaleX(0.7143);">S</span>
<span class="t" style="left:203.60px;top:263.73px;font-size:10.6px;color:#0c0c0c;transform:scaleX(0.8000);">T</span>
<span class="t" style="left:267.60px;top:201.33px;font-size:10.6px;color:#0c0c0c;transform:scaleX(0.8630);">20%</span>
<span class="t" style="left:267.60px;top:217.13px;font-size:10.6px;color:#0c0c0c;transform:scaleX(0.8630);">25%</span>
<span class="t" style="left:267.60px;top:233.83px;font-size:10.6px;color:#0c0c0c;transform:scaleX(0.8630);">15%</span>
<span class="t" style="left:267.60px;top:248.73px;font-size:10.6px;color:#0c0c0c;transform:scaleX(0.8630);">16%</span>
<span class="t" style="left:267.60px;top:263.73px;font-size:10.6px;color:#0c0c0c;transform:scaleX(0.8630);">10%</span>
<span class="t" style="left:405.00px;top:201.33px;font-size:10.6px;color:#0c0c0c;transform:scaleX(0.8355);">20%</span>
<span class="t" style="left:405.00px;top:217.13px;font-size:10.6px;color:#0c0c0c;transform:scaleX(0.8355);">45%</span>
<span class="t" style="left:405.00px;top:233.63px;font-size:10.6px;color:#0c0c0c;transform:scaleX(0.8355);">60%</span>
<span class="t" style="left:405.00px;top:248.73px;font-size:10.6px;color:#0c0c0c;transform:scaleX(0.8355);">76%</span>
<span class="t" style="left:405.00px;top:263.73px;font-size:10.6px;color:#0c0c0c;transform:scaleX(0.8355);">86%</span>
<span class="t" style="left:428.60px;top:215.79px;font-size:11px;color:#ff3b3b;transform:scaleX(0.8111);">Q</span>
<span class="t" style="left:95.00px;top:429.45px;font-size:11.4px;color:#2b2b2b;transform:scaleX(0.8312);font-weight:700;">Sheet1</span>
<span class="t" style="left:147.30px;top:431.65px;font-size:11.4px;color:#e8e8e8;transform:scaleX(0.9115);">Sheet2</span>
<span class="t" style="left:6.90px;top:454.35px;font-size:8.8px;color:#e4e4e4;transform:scaleX(0.8567);">Ready</span>
<span class="t" style="left:41.90px;top:454.35px;font-size:8.8px;color:#e4e4e4;transform:scaleX(0.9085);">Sheet 1 of 2</span>
<span class="t" style="left:97.20px;top:454.35px;font-size:8.8px;color:#e4e4e4;transform:scaleX(0.9114);">Workbook Statistics</span>
<span class="t" style="left:222.80px;top:454.35px;font-size:8.8px;color:#e4e4e4;transform:scaleX(0.9021);">Accessibility: Investigate</span>
<span class="t" style="left:326.60px;top:66.05px;font-size:8.8px;color:#dcdcdc;transform:scaleX(0.9907);">ab</span>
<span class="t" style="left:326.80px;top:71.95px;font-size:8.8px;color:#dcdcdc;transform:scaleX(0.8400);">c</span>
</body></html>
